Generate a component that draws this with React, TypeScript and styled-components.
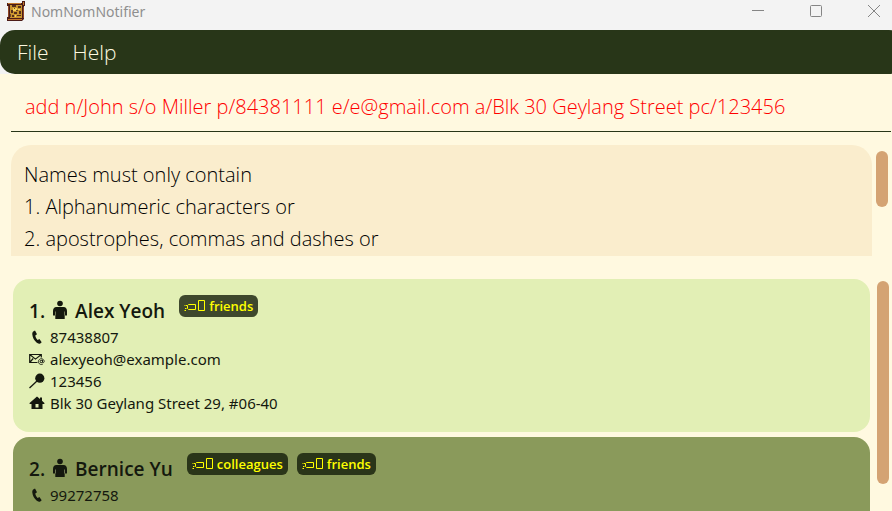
import React, { useState } from "react";
import styled, { createGlobalStyle } from "styled-components";

const GlobalStyle = createGlobalStyle`
  *, *::before, *::after { box-sizing: border-box; }
  body {
    margin: 0;
    background: #fff9e0;
    font-family: "Open Sans", "Noto Sans", sans-serif;
  }
`;

const Window = styled.div`
  display: flex;
  flex-direction: column;
  height: 100vh;
  overflow: hidden;
`;

const TitleBar = styled.header`
  display: flex;
  align-items: flex-start;
  flex: none;
  height: 30px;
  padding-left: 6px;
  background: #f3f3f3;
`;

const AppTitle = styled.h1`
  flex: 1;
  margin: 0 0 0 5px;
  font-family: "Noto Sans", "Open Sans", sans-serif;
  font-size: 14px;
  font-weight: 400;
  line-height: 24px;
  color: #8f8f8f;
`;

const WindowButtons = styled.div`
  display: flex;
  gap: 34px;
  padding-right: 6px;
`;

const WindowButton = styled.button`
  display: flex;
  align-items: center;
  justify-content: center;
  width: 24px;
  height: 22px;
  padding: 0;
  border: 0;
  background: transparent;
  color: #858585;
`;

const MenuShell = styled.div`
  flex: none;
  background: #f3f3f3;
`;

const MenuBar = styled.nav`
  display: flex;
  align-items: center;
  gap: 24px;
  height: 44px;
  margin-right: -12px;
  padding: 0 17px;
  border-radius: 15px;
  background: #283618;
`;

const MenuButton = styled.button`
  padding: 0;
  border: 0;
  background: transparent;
  font: 300 21px/32px "Open Sans", "Noto Sans", sans-serif;
  color: #fefae0;
`;

const CommandInput = styled.input`
  flex: none;
  height: 58px;
  margin: 0 1px 0 11px;
  padding: 7px 14px 0;
  border: 0;
  border-bottom: 1px solid #283618;
  outline: 0;
  background: transparent;
  font: 300 20px/32px "Open Sans", "Noto Sans", sans-serif;
  color: #ff0000;
`;

const ResultRow = styled.section`
  display: flex;
  flex: none;
  gap: 4px;
  margin: 13px 4px 0 11px;
`;

const ResultText = styled.textarea`
  flex: 1;
  height: 111px;
  padding: 14px 13px 0;
  border: 0;
  outline: 0;
  border-radius: 20px 20px 0 0;
  resize: none;
  overflow: hidden;
  background: #faedcd;
  font: 300 20px/32px "Open Sans", "Noto Sans", sans-serif;
  color: #000;
`;

const Thumb = styled.div<{ $height: number; $top: number }>`
  flex: none;
  width: 12px;
  height: ${(p) => p.$height}px;
  margin-top: ${(p) => p.$top}px;
  border-radius: 6px;
  background: #d4a373;
`;

const ListRow = styled.section`
  display: flex;
  flex: 1;
  gap: 7px;
  min-height: 0;
  margin: 23px 3px 0 13px;
`;

const PersonList = styled.ol`
  display: flex;
  flex: 1;
  flex-direction: column;
  gap: 5px;
  margin: 0;
  padding: 0;
  list-style: none;
`;

const Card = styled.li<{ $dark: boolean }>`
  flex: none;
  min-height: 152px;
  padding: 16px 16px 18px;
  border-radius: 16px;
  background: ${(p) => (p.$dark ? "#8a9a5b" : "#e2efb5")};
  color: #14180e;
`;

const CardHeading = styled.div`
  display: flex;
  align-items: flex-start;
  height: 31px;
`;

const Name = styled.h2`
  display: flex;
  align-items: center;
  gap: 7px;
  margin: 0 14px 0 0;
  font-size: 19px;
  font-weight: 600;
  line-height: 33px;
  white-space: pre;

  svg {
    margin-bottom: 4px;
  }
`;

const Tags = styled.div`
  display: flex;
  gap: 9px;
`;

const Tag = styled.span`
  display: flex;
  align-items: center;
  gap: 3px;
  height: 22px;
  padding: 0 5px;
  border-radius: 6px;
  background: rgba(16, 24, 6, 0.78);
  font-size: 13px;
  font-weight: 600;
  color: #ffff00;
`;

const Detail = styled.div`
  display: flex;
  align-items: center;
  gap: 5px;
  height: 22px;
  font-family: "Noto Sans", "Open Sans", sans-serif;
  font-size: 15px;
`;

function AppIcon() {
  return (
    <svg width="20" height="22" viewBox="0 0 20 22" aria-hidden="true">
      <path d="M1 3h15V1h3v5h-1v13l-2 2H1v-4h1V6H1z" fill="#4c1c18" />
      <path d="M2 3h13v1H2zM2 19h14v1H2zM17 2h1v3h-1z" fill="#c47a2c" />
      <path d="M4 5h12v13H4z" fill="#c9952e" />
      <path d="M2 6h1v11H2zM17 7h1v11h-1z" fill="#8e4623" />
      <path d="M6 5h4v2H6zM12 6h3v2h-3zM5 10h2v3H5zM8 12h3v2H8zM13 11h2v3h-2zM6 15h2v2H6zM11 15h4v1h-4z" fill="#55301c" />
      <path d="M7 8h4v3H7zM12 9h2v1h-2zM9 15h1v2H9z" fill="#f6d45a" />
      <path d="M8 8h1v1H8zM10 10h2v1h-2zM4 14h1v3H4z" fill="#6f4a28" />
    </svg>
  );
}

function PersonIcon() {
  return (
    <svg width="16" height="20" viewBox="0 0 16 20" fill="currentColor" aria-hidden="true">
      <circle cx="8" cy="3.5" r="2.8" />
      <path d="M4.500 7h7C14 7 15 9 15 11v4.500h-2.300V19H3.300v-3.500H1V11c0-2 1-4 3.500-4z" />
      <path d="M3.500 11.500v4M12.500 11.500v4" stroke="#a9b584" strokeWidth=".6" />
    </svg>
  );
}

function PhoneIcon() {
  return (
    <svg width="16" height="16" viewBox="0 0 16 16" fill="currentColor" aria-hidden="true">
      <path d="M4.200 2.600 6 1.500l2 3.700-1.700 1.200c.2 1.800 1.100 3.400 2.400 4.500l1.700-.8 2.300 3.200-1.400 1.100c-1.100.7-2.600.3-3.800-.8C5.200 11.500 3.600 8.500 3.300 5.500c-.1-1.300.2-2.300.9-2.900z" />
    </svg>
  );
}

function MailIcon() {
  return (
    <svg width="16" height="16" viewBox="0 0 16 16" fill="none" stroke="currentColor" aria-hidden="true">
      <path d="M8.500 11.500H.7v-8h11.600v3M.7 3.500l5.800 4.600 5.800-4.600M.7 11.500l3.500-4" strokeWidth="1.200" />
      <circle cx="12.300" cy="10.500" r="1.200" />
      <path d="M13.500 9v2.300c.3.800 1.700.4 1.700-1a2.900 2.900 0 1 0-1.400 2.800" strokeWidth=".9" />
    </svg>
  );
}

function PinIcon() {
  return (
    <svg width="16" height="16" viewBox="0 0 16 16" aria-hidden="true">
      <circle cx="10.800" cy="5.200" r="4.600" fill="currentColor" />
      <path d="m8.500 7.500-8 7.500" stroke="currentColor" strokeWidth="1.300" />
    </svg>
  );
}

function HomeIcon() {
  return (
    <svg width="16" height="16" viewBox="0 0 16 16" fill="currentColor" fillRule="evenodd" aria-hidden="true">
      <path d="M8 1.500 11 4V2.500h2v3.200l2.700 2.500-.7.800H13.500v5h-11V9H1l-.7-.8zM6.500 9v3.500h3V9z" />
    </svg>
  );
}

function TagIcon() {
  return (
    <svg width="22" height="14" viewBox="0 0 22 14" fill="none" stroke="currentColor" aria-hidden="true">
      <path d="M4.500 5.500h7v5h-7l-1-1V6.500z" />
      <path d="M3 6.500H.5M1 9.500h2M.5 11.500h2" strokeDasharray="1.500 .5" />
      <path d="M14.500 1.500h6v10h-6z" />
    </svg>
  );
}

type Person = {
  name: string;
  tags: string[];
  details: { kind: "phone" | "email" | "postal" | "address"; text: string }[];
};

const detailIcons = {
  phone: PhoneIcon,
  email: MailIcon,
  postal: PinIcon,
  address: HomeIcon,
};

const people: Person[] = [
  {
    name: "Alex Yeoh",
    tags: ["friends"],
    details: [
      { kind: "phone", text: "87438807" },
      { kind: "email", text: "alexyeoh@example.com" },
      { kind: "postal", text: "123456" },
      { kind: "address", text: "Blk 30 Geylang Street 29, #06-40" },
    ],
  },
  {
    name: "Bernice Yu",
    tags: ["colleagues", "friends"],
    details: [{ kind: "phone", text: "99272758" }],
  },
];

const resultMessage = [
  "Names must only contain",
  "1. Alphanumeric characters or",
  "2. apostrophes, commas and dashes or",
].join("\n");

export default function App() {
  const [command, setCommand] = useState(
    "add n/John s/o Miller p/84381111 e/e@gmail.com a/Blk 30 Geylang Street pc/123456"
  );

  return (
    <Window>
      <GlobalStyle />
      <TitleBar>
        <AppIcon />
        <AppTitle>NomNomNotifier</AppTitle>
        <WindowButtons>
          <WindowButton aria-label="Minimize">
            <svg width="12" height="12" stroke="currentColor"><path d="M0 5.500h12" /></svg>
          </WindowButton>
          <WindowButton aria-label="Maximize">
            <svg width="12" height="12" fill="none" stroke="currentColor"><rect x=".5" y=".5" width="11" height="11" rx="1" /></svg>
          </WindowButton>
          <WindowButton aria-label="Close">
            <svg width="12" height="12" stroke="currentColor"><path d="m0 0 12 12M12 0 0 12" /></svg>
          </WindowButton>
        </WindowButtons>
      </TitleBar>
      <MenuShell>
        <MenuBar>
          <MenuButton>File</MenuButton>
          <MenuButton>Help</MenuButton>
        </MenuBar>
      </MenuShell>
      <CommandInput
        aria-label="Command"
        spellCheck={false}
        value={command}
        onChange={(e) => setCommand(e.target.value)}
      />
      <ResultRow>
        <ResultText aria-label="Result" readOnly spellCheck={false} value={resultMessage} />
        <Thumb $height={56} $top={6} />
      </ResultRow>
      <ListRow>
        <PersonList>
          {people.map((person, index) => (
            <Card key={person.name} $dark={index % 2 === 1}>
              <CardHeading>
                <Name>
                  <span>{index + 1}.</span>
                  <PersonIcon />
                  <span>{person.name}</span>
                </Name>
                <Tags>
                  {person.tags.map((tag) => (
                    <Tag key={tag}>
                      <TagIcon />
                      {tag}
                    </Tag>
                  ))}
                </Tags>
              </CardHeading>
              {person.details.map(({ kind, text }) => {
                const Icon = detailIcons[kind];
                return (
                  <Detail key={kind}>
                    <Icon />
                    {text}
                  </Detail>
                );
              })}
            </Card>
          ))}
        </PersonList>
        <Thumb $height={203} $top={2} />
      </ListRow>
    </Window>
  );
}
